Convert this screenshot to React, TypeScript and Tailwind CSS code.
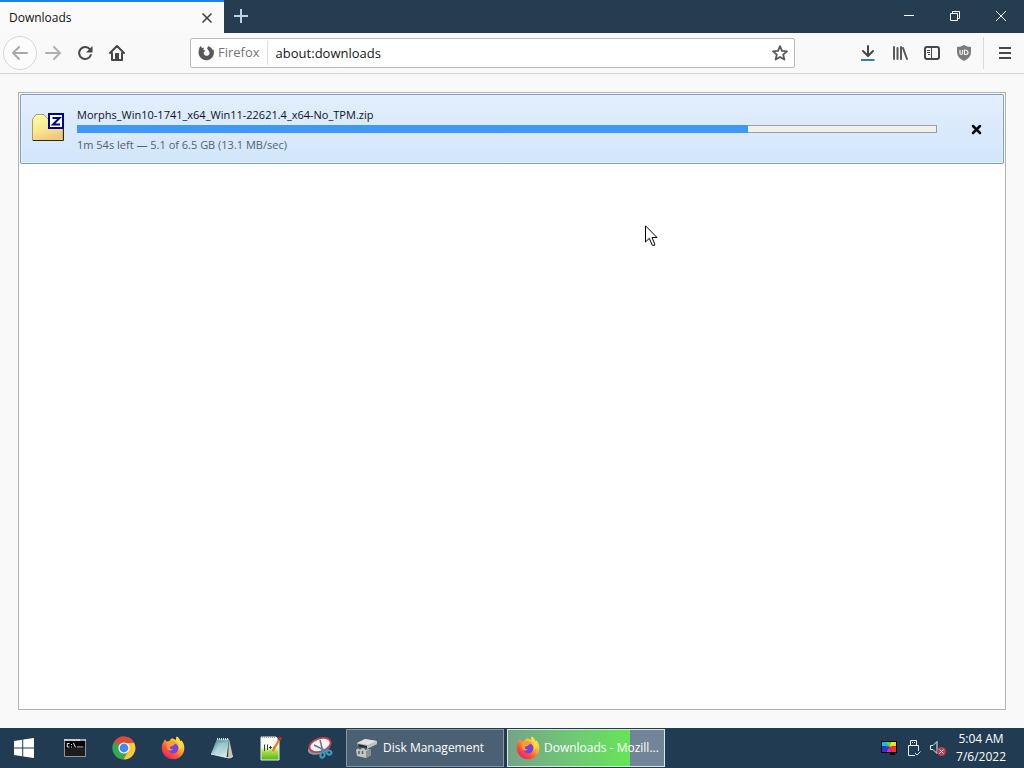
import { useState } from 'react';
import type { ReactNode } from 'react';

const download = {
  name: 'Morphs_Win10-1741_x64_Win11-22621.4_x64-No_TPM.zip',
  status: '1m 54s left — 5.1 of 6.5 GB (13.1 MB/sec)',
  percent: 78,
};

function FirefoxLogo({ id }: { id: string }) {
  return (
    <svg width="24" height="24" viewBox="0 0 24 24" aria-hidden="true" className="shrink-0">
      <defs>
        <linearGradient id={`${id}-flame`} x1="0.85" y1="0.1" x2="0.2" y2="0.95">
          <stop offset="0" stopColor="#fff14a" />
          <stop offset="0.35" stopColor="#ffb02e" />
          <stop offset="0.65" stopColor="#ff5a36" />
          <stop offset="1" stopColor="#e91e63" />
        </linearGradient>
      </defs>
      <path
        d="M2.2 6.5 4 3.2l1.4 2.4c1-.5 2-.7 3-.6.6-1.3 1.6-2.3 3-2.8L14.8 4l1-3.4c2 1.300 3.200 3 3.700 4.700l1.100-.700c2 2.500 3 5.500 2.700 8.600C22.700 19 18 23.300 12.200 23.300 6 23.300 1 18.700.8 12.600c-.1-2.300.4-4.400 1.400-6.100z"
        fill={`url(#${id}-flame)`}
      />
      <circle cx="12.200" cy="12.200" r="5.200" fill="#7542e5" />
      <path d="M8.500 5.500c3-1.200 6.500-.3 8.200 2.400-1.500-.5-2.600-.2-3.300.6l-2 1.500c-1.500 0-2.600.8-2.400 2 .2 1 1.500 1.600 3 1.200-1.300 1.700-4 1.900-5.300.2C4.800 11 5.300 7.500 8.500 5.500z" fill="#ff9a33" />
      <path d="M15.800.6c-1.500 3.400.5 5 1.700 7 1.200 2.200.9 4.700-.3 6.600 3.400-1.600 4.600-5.400 3.400-8.600l-1.100.8c-.5-2.400-2-4.500-3.700-5.800z" fill="#ffdb3d" />
    </svg>
  );
}

function ChromeLogo() {
  return (
    <svg width="24" height="24" viewBox="0 0 24 24" aria-hidden="true">
      <path d="M12 12 2 6A11.500 11.500 0 0 1 22 6.500L12 7z" fill="#dd4b3e" />
      <path d="M2 6a11.500 11.500 0 0 0 9.200 17.500L16.300 14.500 7.700 14.500z" fill="#35a853" />
      <path d="M22 6.500a11.500 11.500 0 0 1-10.800 17L16.500 14.500 15 7z" fill="#fcc934" />
      <path d="M12 6.500h10a11.500 11.500 0 0 0-20-.5l5.500 9z" fill="#dd4b3e" />
      <path d="M2 6 7.300 14.800 12 12z" fill="#35a853" />
      <circle cx="12" cy="12" r="5.600" fill="#fff" />
      <circle cx="12" cy="12" r="4.400" fill="#4285f4" />
    </svg>
  );
}

function CommandPromptIcon() {
  return (
    <svg width="24" height="20" viewBox="0 0 24 20" aria-hidden="true">
      <path d="M1.500 1.500h21v17h-21z" fill="#050505" stroke="#8c969d" />
      <path d="M1 1h22v2H1z" fill="#c9ced2" />
      <path d="M17 2h5" stroke="#6c7b87" />
      <path d="M6.500 5.500H4.300V9h2.200M8.500 6v1M8.500 8.500v1M10.500 5l2 4.500M14 9h6" stroke="#e4e4e4" fill="none" />
      <path d="M2 11l20-3v10H2z" fill="#333" opacity=".5" />
    </svg>
  );
}

function NotepadIcon() {
  return (
    <svg width="24" height="24" viewBox="0 0 24 24" aria-hidden="true">
      <defs>
        <linearGradient id="notepad" x1="0.2" y1="0" x2="0.7" y2="1">
          <stop offset="0" stopColor="#4f9299" />
          <stop offset="0.6" stopColor="#a4d0d5" />
          <stop offset="1" stopColor="#d6eeee" />
        </linearGradient>
      </defs>
      <path d="m19 3 4 18-5 1z" fill="#c9c8b4" />
      <path d="M7 3h12l-2.500 18.500L1 18z" fill="url(#notepad)" />
      <path d="m1 18 15.500 3.500L20 22l3-2" fill="none" stroke="#e7e8dd" />
      <path d="M7 3h12" stroke="#d3dedf" strokeWidth="2" strokeDasharray="1 1" />
      <path d="M8 7h8L7 18H4z" fill="#fff" opacity=".18" />
    </svg>
  );
}

function NotepadPlusIcon() {
  return (
    <svg width="24" height="26" viewBox="0 0 24 26" aria-hidden="true">
      <defs>
        <linearGradient id="npp" x1="0" y1="0" x2="0" y2="1">
          <stop offset="0" stopColor="#fff" />
          <stop offset="0.45" stopColor="#f2f9e4" />
          <stop offset="0.65" stopColor="#a5dc3e" />
          <stop offset="1" stopColor="#52b51f" />
        </linearGradient>
      </defs>
      <path d="M2 2h15l3 3v20H2z" fill="url(#npp)" stroke="#e9eee5" />
      <path d="M3 2.500h13" stroke="#8da0a5" strokeDasharray="1 1" />
      <path d="M5.500 16V9.500M8.500 9.500V15M10 12.500h3M11.500 11v3M14 12.500h3M15.500 11v3" fill="none" stroke="#34403a" />
      <path d="m21.500 2.500-8 14" stroke="#e4822b" strokeWidth="2.500" />
      <path d="m21.500 2-2 3" stroke="#a5322d" strokeWidth="3" />
      <path d="m13.500 16-.8 3 2-2" fill="#e6cb85" />
    </svg>
  );
}

function SnippingIcon() {
  return (
    <svg width="26" height="24" viewBox="0 0 26 24" aria-hidden="true">
      <ellipse cx="12" cy="12" rx="11.500" ry="6" transform="rotate(-18 12 12)" fill="#8d9ba7" />
      <ellipse cx="13" cy="9" rx="11" ry="6.500" transform="rotate(-18 13 9)" fill="#f6f4f5" stroke="#c83c50" strokeWidth="1.800" />
      <path d="m13 4 3 12M7 9l12 6" stroke="#6b7680" strokeWidth="1.500" />
      <path d="m15 12 2 4m-2-2 5 1" stroke="#408eaa" strokeWidth="2" />
      <ellipse cx="15.500" cy="19" rx="2" ry="2.800" transform="rotate(18 15.500 19)" fill="none" stroke="#3f9cc0" strokeWidth="2" />
      <ellipse cx="22" cy="16.500" rx="2.500" ry="2" transform="rotate(35 22 16.500)" fill="none" stroke="#3f9cc0" strokeWidth="2" />
    </svg>
  );
}

function DiskIcon() {
  return (
    <svg width="24" height="24" viewBox="0 0 24 24" aria-hidden="true" className="shrink-0">
      <path d="M2 7 10 3l12 2v3L13 12 3 10z" fill="#a7aba9" />
      <path d="m2 7 8-4 12 2-9 4z" fill="#e1e3e0" />
      <path d="m3 8 9 2v2l-8-1z" fill="#25302c" />
      <path d="m12 10 10-5v3l-10 5z" fill="#bec2be" />
      <path d="M1 14q2-3 4 0l2-2q3 0 3 2l4-1 2 6-5 3-9-2z" fill="#c4c6c5" />
      <path d="m11 15 5-2v6l-5 3z" fill="#8d9190" />
      <path d="M4 15v3M7.500 15v3" stroke="#555f61" strokeWidth="1.500" />
    </svg>
  );
}

function ZipFolderIcon() {
  return (
    <svg width="32" height="32" viewBox="0 0 32 32" aria-hidden="true" className="shrink-0">
      <defs>
        <linearGradient id="folder" x1="0" y1="0" x2="0.4" y2="1">
          <stop offset="0" stopColor="#ffffa0" />
          <stop offset="0.6" stopColor="#f8e992" />
          <stop offset="1" stopColor="#f0c97e" />
        </linearGradient>
      </defs>
      <path d="M.5 6.500 4 1.500h8l3 4h16v22H.5z" fill="url(#folder)" stroke="#aaa258" />
      <path d="M1 27.500h30.500V8" stroke="#292819" fill="none" />
      <path d="M2 6.500 4.500 2.500h7" stroke="#fffde0" fill="none" />
      <rect x="17" y="1" width="14" height="14" fill="#fff" stroke="#00009b" strokeWidth="2" />
      <path d="M20.500 5h7l-6.500 6.500h7" fill="none" stroke="#00009b" strokeWidth="2" />
    </svg>
  );
}

function ToolbarButton({ label, children }: { label: string; children: ReactNode }) {
  return (
    <button type="button" aria-label={label} className="flex h-8 w-8 shrink-0 items-center justify-center rounded-sm hover:bg-black/10">
      {children}
    </button>
  );
}

function TitleBar() {
  return (
    <header className="flex h-[33px] bg-[#263c50]">
      <div className="flex w-56 items-center justify-between border-t-2 border-[#1a82e8] bg-[#fafafb] pr-[7px] pl-[9px] text-[#111]">
        <span>Downloads</span>
        <button type="button" aria-label="Close tab" className="flex h-5 w-5 items-center justify-center">
          <svg width="12" height="12" viewBox="0 0 12 12" stroke="#3d3d40" strokeWidth="1.500">
            <path d="m1.500 1.500 9 9m0-9-9 9" />
          </svg>
        </button>
      </div>
      <button type="button" aria-label="New tab" className="flex h-8 w-[34px] items-center justify-center">
        <svg width="14" height="14" viewBox="0 0 14 14" stroke="#b9d3ed" strokeWidth="2">
          <path d="M7 0v14M0 7h14" />
        </svg>
      </button>
      <div className="ml-auto flex h-8">
        <button type="button" aria-label="Minimize" className="flex w-[46px] items-center justify-center">
          <svg width="10" height="10" viewBox="0 0 10 10" stroke="#fff"><path d="M0 4.500h10" /></svg>
        </button>
        <button type="button" aria-label="Restore" className="flex w-[46px] items-center justify-center">
          <svg width="10" height="10" viewBox="0 0 10 10" fill="none" stroke="#fff">
            <path d="M.5 2.500h7v7h-7zM2.500 2V.5h7v7H8" />
          </svg>
        </button>
        <button type="button" aria-label="Close" className="flex w-[46px] items-center justify-center">
          <svg width="10" height="10" viewBox="0 0 10 10" stroke="#fff"><path d="m0 0 10 10M10 0 0 10" /></svg>
        </button>
      </div>
    </header>
  );
}

function NavBar() {
  const [url, setUrl] = useState('about:downloads');

  return (
    <nav className="flex h-[41px] items-center border-b border-[#d5d6d8] bg-[#f9f9fa] px-[3px]">
      <button type="button" aria-label="Back" className="flex h-[34px] w-[34px] items-center justify-center rounded-full border border-[#d6d6d7] bg-[#fcfcfc]">
        <svg width="16" height="16" viewBox="0 0 16 16" fill="none" stroke="#a9a9ab" strokeWidth="2" strokeLinecap="round" strokeLinejoin="round">
          <path d="M15 8H1.500M7 2 1 8l6 6" />
        </svg>
      </button>
      <ToolbarButton label="Forward">
        <svg width="16" height="16" viewBox="0 0 16 16" fill="none" stroke="#b0b0b2" strokeWidth="2" strokeLinecap="round" strokeLinejoin="round">
          <path d="M1 8h13.500M9 2l6 6-6 6" />
        </svg>
      </ToolbarButton>
      <ToolbarButton label="Reload">
        <svg width="16" height="16" viewBox="0 0 16 16" fill="none" stroke="#47474a" strokeWidth="2">
          <path d="M13 4.500A6 6 0 1 0 13.800 10" strokeLinecap="round" />
          <path d="M15.500 1v6.500H9z" fill="#47474a" stroke="none" />
        </svg>
      </ToolbarButton>
      <ToolbarButton label="Home">
        <svg width="16" height="16" viewBox="0 0 16 16" fill="none" stroke="#47474a" strokeWidth="2" strokeLinecap="round" strokeLinejoin="round">
          <path d="m1 8 7-7 7 7M3 8v7h10V8" />
          <path d="M6.500 14V8.500h3V14" fill="#47474a" strokeWidth="1" />
        </svg>
      </ToolbarButton>
      <div className="w-[57px] shrink-0" />
      <div className="flex h-[30px] min-w-0 flex-1 items-center rounded-xs border border-[#b7bbc0] bg-white text-[13px]">
        <div className="flex h-6 items-center gap-1 border-r border-[#dedee0] px-[7px] text-[#737377]">
          <svg width="16" height="16" viewBox="0 0 16 16" fill="#59595c" aria-hidden="true">
            <path d="M1.500 2.500 2.800 1l1.200 2q1-.5 2.200-.2-.9 1-.8 2l2 1-1.600 1.400c-.5 2.200.8 3.600 2.500 3.600 2 0 3.500-1.400 3.200-3.400-.2-1.500-1.200-2-2-3.100-.6-1 .1-2.400.9-3 2 .5 3.600 2 4.200 3.600l.8-.6c2 6-1.800 11-7.300 11C3 15.300-.8 10 1 4.600z" />
          </svg>
          <span>Firefox</span>
        </div>
        <input
          aria-label="Address"
          value={url}
          onChange={(e) => setUrl(e.target.value)}
          className="h-7 min-w-0 flex-1 bg-transparent px-2 text-[#161618] outline-none"
        />
        <button type="button" aria-label="Bookmark this page" className="flex h-7 w-7 items-center justify-center">
          <svg width="16" height="16" viewBox="0 0 16 16" fill="none" stroke="#58585b" strokeWidth="1.800" strokeLinejoin="round">
            <path d="m8 1.200 2 4.600 5 .5-3.800 3.300 1.200 5L8 12l-4.400 2.600 1.200-5L1 6.300l5-.5z" />
          </svg>
        </button>
      </div>
      <div className="w-[57px] shrink-0" />
      <ToolbarButton label="Downloads">
        <svg width="16" height="16" viewBox="0 0 16 16" fill="none">
          <path d="M8 1v9.500M3 6l5 5 5-5" stroke="#47474a" strokeWidth="2" strokeLinecap="round" strokeLinejoin="round" />
          <path d="M1 15h13.500" stroke="#3a7cb5" strokeWidth="2" />
        </svg>
      </ToolbarButton>
      <ToolbarButton label="Library">
        <svg width="16" height="16" viewBox="0 0 16 16" fill="none" stroke="#59595c" strokeWidth="2" strokeLinecap="round">
          <path d="M2 2v12M5.500 3v11M9 2v12M11 3l4 11" />
        </svg>
      </ToolbarButton>
      <ToolbarButton label="Sidebars">
        <svg width="16" height="16" viewBox="0 0 16 16" fill="none" stroke="#47474a">
          <rect x="1" y="2" width="14" height="12" rx="2" strokeWidth="2" />
          <path d="M7.500 2v12M3 5.500h3M3 7.500h3M4 9.500h2" />
        </svg>
      </ToolbarButton>
      <ToolbarButton label="uBlock Origin">
        <svg width="16" height="16" viewBox="0 0 16 16" fill="none">
          <path d="M8 0q3 2 7 2v5q0 6-7 9-7-3-7-9V2q4 0 7-2z" fill="#7b7b7e" />
          <path d="M4 5v3q0 1.500 1.200 1.500T6.500 8V5m2 0v4.500h1q2.500 0 2.500-2T9.500 5z" stroke="#eee" strokeWidth="1.200" />
        </svg>
      </ToolbarButton>
      <div className="mr-[5px] ml-[3px] h-8 w-px bg-[#dadadc]" />
      <ToolbarButton label="Open menu">
        <svg width="16" height="16" viewBox="0 0 16 16" stroke="#47474a" strokeWidth="2">
          <path d="M2 3h12M2 8h12M2 13h12" />
        </svg>
      </ToolbarButton>
    </nav>
  );
}

function DownloadItem() {
  return (
    <li className="flex h-[70px] items-center rounded-xs border border-[#7c9cb9] bg-linear-to-b from-[#e2eefd] to-[#d2e6fa] px-[11px] text-[11px] shadow-[inset_0_0_0_1px_#eaf4ff]">
      <ZipFolderIcon />
      <div className="ml-[13px] min-w-0 flex-1">
        <p className="truncate leading-5 text-[#0c121b]">{download.name}</p>
        <div
          role="progressbar"
          aria-label={download.name}
          aria-valuenow={download.percent}
          className="h-2 bg-[#f0f0ee] outline-1 -outline-offset-1 outline-[#9a9fa4]"
        >
          <div className="relative h-full bg-[#3f98f6]" style={{ width: `${download.percent}%` }} />
        </div>
        <p className="pt-1 leading-4 text-[#536171]">{download.status}</p>
      </div>
      <button type="button" aria-label="Cancel download" className="ml-6 flex h-8 w-[31px] items-center justify-center">
        <svg width="11" height="11" viewBox="0 0 11 11" stroke="#0a0a0c" strokeWidth="2.500" strokeLinecap="round">
          <path d="m2 2 7 7m0-7-7 7" />
        </svg>
      </button>
    </li>
  );
}

const launchers = [
  { label: 'Command Prompt', icon: <CommandPromptIcon /> },
  { label: 'Google Chrome', icon: <ChromeLogo /> },
  { label: 'Firefox', icon: <FirefoxLogo id="launcher" /> },
  { label: 'Notepad', icon: <NotepadIcon /> },
  { label: 'Notepad++', icon: <NotepadPlusIcon /> },
  { label: 'Snipping Tool', icon: <SnippingIcon /> },
];

function Taskbar() {
  return (
    <footer className="flex h-10 items-center bg-[#213b53] text-white">
      <button type="button" aria-label="Start" className="flex h-10 w-12 items-center justify-center">
        <svg width="20" height="22" viewBox="0 0 20 22" fill="#fff">
          <path d="M0 4 8.200 2.700v7.700H0zM9.200 2.500 20 1v9.400H9.200zM0 11.400h8.200v7.800L0 18zM9.200 11.400H20V21L9.200 19.400z" />
        </svg>
      </button>
      <div className="ml-[2px] flex">
        {launchers.map((item) => (
          <button key={item.label} type="button" aria-label={item.label} className="flex h-10 w-[49px] items-center justify-center">
            {item.icon}
          </button>
        ))}
      </div>
      <div className="ml-[2px] flex gap-[3px]">
        <button type="button" className="flex h-[38px] w-[158px] items-center gap-1 border border-[#8795a1] bg-[#4c6074] px-2">
          <DiskIcon />
          <span>Disk Management</span>
        </button>
        <button
          type="button"
          className="flex h-[38px] w-[158px] items-center gap-1 border border-[#d7e8dc] bg-[linear-gradient(to_right,#75a487_0%,#6fcb73_45%,#65e557_78%,#728497_78%)] px-2"
        >
          <FirefoxLogo id="task" />
          <span className="whitespace-nowrap">Downloads - Mozill...</span>
        </button>
      </div>
      <div className="ml-auto flex items-center">
        <svg width="16" height="16" viewBox="0 0 16 16" aria-label="Display color" className="mr-[10px]">
          <path d="M0 1h16v12h-2v2H9v-2H0z" fill="#080b0b" />
          <path d="M1 2h5l2 5-7-1z" fill="#18b7dd" />
          <path d="M5 2h5L8 7z" fill="#4de33a" />
          <path d="M10 2h5v4L8 7z" fill="#f4df25" />
          <path d="M15 6v6h-4L8 7z" fill="#ee362e" />
          <path d="M11 12H5l3-5z" fill="#e429c1" />
          <path d="M1 6v6h4l3-5z" fill="#2738dc" />
        </svg>
        <svg width="14" height="18" viewBox="0 0 14 18" fill="none" stroke="#e5edf2" aria-label="Safely remove hardware" className="mr-2">
          <path d="M3.500 6.500v-5h6v5M1.500 6.500h10V12M1.500 6.500v10H8M5 3.500h1M7 3.500h1" />
          <path d="m8 14 2 2 3.500-3.500" />
        </svg>
        <svg width="18" height="18" viewBox="0 0 18 18" fill="none" aria-label="Volume muted" className="mr-[9px]">
          <path d="M1.500 6.500H4l4-4v12l-4-4H1.500z" stroke="#e5edf2" />
          <circle cx="12.500" cy="12.500" r="4.500" fill="#cf3844" />
          <path d="m10.500 10.500 4 4m0-4-4 4" stroke="#fff" />
        </svg>
        <time dateTime="2022-07-06T05:04" className="mr-[18px] flex flex-col text-center leading-[18px]">
          <span>5:04 AM</span>
          <span>7/6/2022</span>
        </time>
      </div>
    </footer>
  );
}

export default function App() {
  return (
    <div className="relative flex min-h-screen flex-col bg-[#f9f9fa] font-['Open_Sans','Noto_Sans',sans-serif] text-xs">
      <TitleBar />
      <NavBar />
      <main className="flex flex-1 flex-col p-[18px]">
        <ul className="flex-1 border border-[#aeb1b5] bg-white p-px">
          <DownloadItem />
        </ul>
      </main>
      <Taskbar />
      <svg width="13" height="22" viewBox="0 0 13 22" className="pointer-events-none absolute top-[225px] left-[645px]" aria-hidden="true">
        <path d="M.5.800v16.200l3.800-3.700 3 7h2.400v-1.500L7 12.500h5z" fill="#fff" stroke="#000" />
      </svg>
    </div>
  );
}
